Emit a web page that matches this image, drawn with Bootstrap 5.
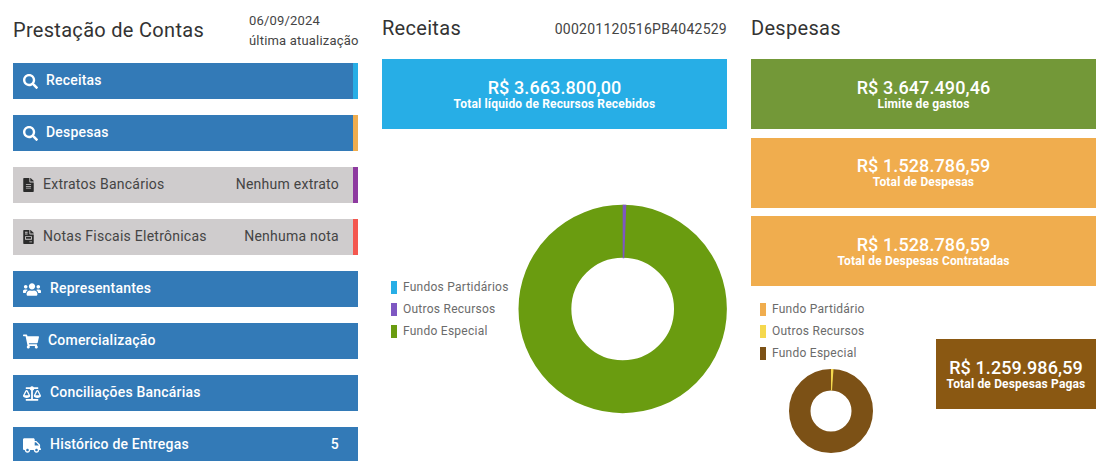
<!DOCTYPE html>
<html lang="pt-BR">
<head>
<meta charset="utf-8">
<title>Prestação de Contas</title>
<link rel="stylesheet" href="https://cdn.jsdelivr.net/npm/bootstrap@5.3.0/dist/css/bootstrap.min.css">
<style>
html, body { height: 461px; overflow: hidden; }
body { font-family: Roboto, "Liberation Sans", sans-serif; color: #333; background: #fff; }
.page-cols { padding: 0 15px 0 13px; gap: 24px; }
.page-col { width: 345px; flex: none; }
.col-head { height: 59px; }
.col-head-first { height: 63px; }
.col-title { font-size: 20px; font-weight: 400; letter-spacing: .3px; line-height: 24px; color: #333; margin: 0; }
.first-title { padding-top: 18px; }
.mid-title { padding-top: 16px; }
.upd { font-size: 13px; letter-spacing: .19px; line-height: 20px; color: #444; padding-top: 11px; width: 109px; white-space: nowrap; }
.proto { font-size: 14px; letter-spacing: .25px; color: #444; padding-top: 19px; line-height: 20px; }
.menu-row { height: 36px; margin-bottom: 16px; padding: 0 14px 2px 10px; font-size: 14px; font-weight: 500; letter-spacing: .2px; color: #fff; background: #337ab7; border-right: 5px solid transparent; position: relative; }
.menu-row.muted-row { background: #cfcccd; color: #444; font-weight: 400; letter-spacing: .25px; }
.menu-row.edge-blue { border-right-color: #27aee6; }
.menu-row.edge-orange { border-right-color: #f0ad4e; }
.menu-row.edge-purple { border-right-color: #8e3aa0; }
.menu-row.edge-red { border-right-color: #f4574f; }
.menu-row.plain { border-right: 0; padding-right: 19px; }
.ico { fill: currentColor; flex: none; display: block; margin-top: 2px; }
.ico-gap { margin-right: 9px; }
.ico-dark { color: #2b2b2b; }
.stat { height: 70px; color: #fff; margin-bottom: 8.5px; }
.stat-val { font-size: 18px; font-weight: 500; line-height: 20px; letter-spacing: .1px; }
.stat-lbl { font-size: 12px; font-weight: 700; line-height: 13px; letter-spacing: .17px; }
.bg-rec { background: #27aee6; }
.bg-lim { background: #739838; }
.bg-des { background: #f0ad4e; }
.bg-pag { background: #8a5812; width: 160px; margin: 0; }
.chart-wrap { padding: 66.5px 0 0 9px; }
.legend-list { font-size: 12px; letter-spacing: .25px; color: #6b6b6b; width: 127px; }
.legend-row { height: 22px; line-height: 22px; }
.swatch { width: 6px; height: 13px; margin-right: 6px; flex: none; }
.sw-blue { background: #27aee6; }
.sw-purple { background: #7e57c2; }
.sw-green { background: #6a9c10; }
.sw-orange { background: #f0ad4e; }
.sw-yellow { background: #f5d84e; }
.sw-brown { background: #7c5116; }
.low-block { padding: 4px 0 0 9px; width: 185px; }
.low-area { margin-top: -.5px; }
.pag-wrap { padding-top: 45px; }
.low-donut { margin: 4px 0 0 28px; display: block; }
.big-donut { display: block; }
</style>
</head>
<body>
<div class="d-flex page-cols">
  <div class="page-col">
    <div class="col-head-first d-flex justify-content-between">
      <h1 class="col-title first-title">Prestação de Contas</h1>
      <div class="upd">06/09/2024<br>última atualização</div>
    </div>
    <div class="menu-row edge-blue d-flex align-items-center">
      <svg class="ico me-2" width="15" height="15" viewBox="0 0 512 512"><path d="M505 442.7L405.3 343c-4.5-4.5-10.6-7-17-7H372c27.6-35.3 44-79.7 44-128C416 93.1 322.9 0 208 0S0 93.1 0 208s93.1 208 208 208c48.3 0 92.7-16.4 128-44v16.3c0 6.4 2.5 12.5 7 17l99.7 99.7c9.4 9.4 24.6 9.4 33.9 0l28.3-28.3c9.4-9.4 9.4-24.6.1-34zM208 336c-70.7 0-128-57.2-128-128 0-70.7 57.2-128 128-128 70.7 0 128 57.2 128 128 0 70.7-57.2 128-128 128z"/></svg>
      <span>Receitas</span>
    </div>
    <div class="menu-row edge-orange d-flex align-items-center">
      <svg class="ico me-2" width="15" height="15" viewBox="0 0 512 512"><path d="M505 442.7L405.3 343c-4.5-4.5-10.6-7-17-7H372c27.6-35.3 44-79.7 44-128C416 93.1 322.9 0 208 0S0 93.1 0 208s93.1 208 208 208c48.3 0 92.7-16.4 128-44v16.3c0 6.4 2.5 12.5 7 17l99.7 99.7c9.4 9.4 24.6 9.4 33.9 0l28.3-28.3c9.4-9.4 9.4-24.6.1-34zM208 336c-70.7 0-128-57.2-128-128 0-70.7 57.2-128 128-128 70.7 0 128 57.2 128 128 0 70.7-57.2 128-128 128z"/></svg>
      <span>Despesas</span>
    </div>
    <div class="menu-row muted-row edge-purple d-flex align-items-center justify-content-between">
      <span class="d-flex align-items-center">
        <svg class="ico ico-dark ico-gap" width="11" height="14" viewBox="0 0 384 512"><path d="M224 136V0H24C10.7 0 0 10.7 0 24v464c0 13.3 10.7 24 24 24h336c13.3 0 24-10.7 24-24V160H248c-13.2 0-24-10.8-24-24zm64 236c0 6.6-5.4 12-12 12H108c-6.6 0-12-5.4-12-12v-8c0-6.6 5.4-12 12-12h168c6.6 0 12 5.4 12 12v8zm0-64c0 6.6-5.4 12-12 12H108c-6.6 0-12-5.4-12-12v-8c0-6.6 5.4-12 12-12h168c6.6 0 12 5.4 12 12v8zm0-72v8c0 6.6-5.4 12-12 12H108c-6.6 0-12-5.4-12-12v-8c0-6.6 5.4-12 12-12h168c6.6 0 12 5.4 12 12zm96-114.1v6.1H256V0h6.1c6.4 0 12.5 2.5 17 7l97.9 98c4.5 4.5 7 10.6 7 16.9z"/></svg>
        Extratos Bancários
      </span>
      <span>Nenhum extrato</span>
    </div>
    <div class="menu-row muted-row edge-red d-flex align-items-center justify-content-between">
      <span class="d-flex align-items-center">
        <svg class="ico ico-dark ico-gap" width="11" height="14" viewBox="0 0 384 512"><path d="M288 256H96v64h192v-64zm89-151L279.1 7c-4.5-4.5-10.6-7-17-7H256v128h128v-6.1c0-6.3-2.5-12.4-7-16.9zm-153 31V0H24C10.7 0 0 10.7 0 24v464c0 13.3 10.7 24 24 24h336c13.3 0 24-10.7 24-24V160H248c-13.2 0-24-10.8-24-24zM64 72c0-4.42 3.58-8 8-8h80c4.42 0 8 3.58 8 8v16c0 4.42-3.58 8-8 8H72c-4.42 0-8-3.58-8-8V72zm0 64c0-4.42 3.58-8 8-8h80c4.42 0 8 3.58 8 8v16c0 4.42-3.58 8-8 8H72c-4.42 0-8-3.58-8-8v-16zm256 304c0 4.42-3.58 8-8 8h-80c-4.42 0-8-3.58-8-8v-16c0-4.42 3.58-8 8-8h80c4.42 0 8 3.58 8 8v16zm0-200v96c0 8.84-7.16 16-16 16H80c-8.84 0-16-7.16-16-16v-96c0-8.84 7.16-16 16-16h224c8.84 0 16 7.16 16 16z"/></svg>
        Notas Fiscais Eletrônicas
      </span>
      <span>Nenhuma nota</span>
    </div>
    <div class="menu-row plain d-flex align-items-center">
      <svg class="ico ico-gap" width="18" height="15" viewBox="0 0 640 512"><path d="M96 224c35.3 0 64-28.7 64-64s-28.7-64-64-64-64 28.7-64 64 28.7 64 64 64zm448 0c35.3 0 64-28.7 64-64s-28.7-64-64-64-64 28.7-64 64 28.7 64 64 64zm32 32h-64c-17.6 0-33.5 7.1-45.1 18.6 40.3 22.1 68.9 62 75.1 109.4h66c17.7 0 32-14.3 32-32v-32c0-35.3-28.7-64-64-64zm-256 0c61.9 0 112-50.1 112-112S381.9 32 320 32 208 82.1 208 144s50.1 112 112 112zm76.8 32h-8.3c-20.8 10-43.9 16-68.5 16s-47.6-6-68.5-16h-8.3C179.6 288 128 339.6 128 403.2V432c0 26.5 21.5 48 48 48h288c26.5 0 48-21.5 48-48v-28.8c0-63.6-51.6-115.2-115.2-115.2zm-223.7-13.4C161.5 263.1 145.6 256 128 256H64c-35.3 0-64 28.7-64 64v32c0 17.7 14.3 32 32 32h65.9c6.3-47.4 34.9-87.3 75.2-109.4z"/></svg>
      <span>Representantes</span>
    </div>
    <div class="menu-row plain d-flex align-items-center">
      <svg class="ico ico-gap" width="16" height="15" viewBox="0 0 576 512"><path d="M528.12 301.319l47.273-208C578.806 78.301 567.391 64 551.99 64H159.208l-9.166-44.81C147.758 8.021 137.93 0 126.529 0H24C10.745 0 0 10.745 0 24v16c0 13.255 10.745 24 24 24h69.883l70.248 343.435C147.325 417.1 136 435.222 136 456c0 30.928 25.072 56 56 56s56-25.072 56-56c0-15.674-6.447-29.835-16.824-40h209.647C430.447 426.165 424 440.326 424 456c0 30.928 25.072 56 56 56s56-25.072 56-56c0-22.172-12.888-41.332-31.579-50.405l5.517-24.276c3.413-15.018-8.002-29.319-23.403-29.319H218.117l-6.545-32h293.145c11.206 0 20.92-7.754 23.403-18.681z"/></svg>
      <span>Comercialização</span>
    </div>
    <div class="menu-row plain d-flex align-items-center">
      <svg class="ico ico-gap" width="18" height="15" viewBox="0 0 640 512"><path d="M256 336h-.02c0-16.18 1.34-8.73-85.05-181.51-17.65-35.29-68.19-35.36-85.87 0C-2.06 328.75.02 320.33.02 336H0c0 44.18 57.31 80 128 80s128-35.82 128-80zM128 176l72 144H56l72-144zm511.98 160c0-16.18 1.34-8.73-85.05-181.51-17.65-35.29-68.19-35.36-85.87 0-87.12 174.26-85.04 165.84-85.04 181.51H384c0 44.18 57.31 80 128 80s128-35.82 128-80h-.02zM440 320l72-144 72 144H440zm88 128H352V153.25c23.51-10.29 41.16-31.48 46.39-57.25H528c8.84 0 16-7.16 16-16V48c0-8.84-7.16-16-16-16H383.64C369.04 12.68 346.09 0 320 0s-49.04 12.68-63.64 32H112c-8.84 0-16 7.16-16 16v32c0 8.84 7.16 16 16 16h129.61c5.23 25.76 22.87 46.96 46.39 57.25V448H112c-8.84 0-16 7.16-16 16v32c0 8.84 7.16 16 16 16h416c8.84 0 16-7.16 16-16v-32c0-8.84-7.16-16-16-16z"/></svg>
      <span>Conciliações Bancárias</span>
    </div>
    <div class="menu-row plain d-flex align-items-center justify-content-between">
      <span class="d-flex align-items-center">
        <svg class="ico ico-gap" width="18" height="15" viewBox="0 0 640 512"><path d="M624 352h-16V243.9c0-12.7-5.1-24.9-14.1-33.9L494 110.1c-9-9-21.2-14.1-33.9-14.1H416V48c0-26.5-21.5-48-48-48H48C21.5 0 0 21.5 0 48v320c0 26.5 21.5 48 48 48h16c0 53 43 96 96 96s96-43 96-96h128c0 53 43 96 96 96s96-43 96-96h48c8.8 0 16-7.2 16-16v-32c0-8.8-7.2-16-16-16zM160 464c-26.5 0-48-21.5-48-48s21.5-48 48-48 48 21.5 48 48-21.5 48-48 48zm320 0c-26.5 0-48-21.5-48-48s21.5-48 48-48 48 21.5 48 48-21.5 48-48 48zm80-208H416V144h44.1l99.9 99.9V256z"/></svg>
        Histórico de Entregas
      </span>
      <span>5</span>
    </div>
  </div>

  <div class="page-col">
    <div class="col-head d-flex justify-content-between">
      <h2 class="col-title mid-title">Receitas</h2>
      <div class="proto">000201120516PB4042529</div>
    </div>
    <div class="stat bg-rec d-flex flex-column justify-content-center text-center">
      <div class="stat-val">R$ 3.663.800,00</div>
      <div class="stat-lbl">Total líquido de Recursos Recebidos</div>
    </div>
    <div class="chart-wrap d-flex align-items-center">
      <div class="legend-list">
        <div class="legend-row d-flex align-items-center"><i class="swatch sw-blue"></i>Fundos Partidários</div>
        <div class="legend-row d-flex align-items-center"><i class="swatch sw-purple"></i>Outros Recursos</div>
        <div class="legend-row d-flex align-items-center"><i class="swatch sw-green"></i>Fundo Especial</div>
      </div>
      <svg class="big-donut" width="210" height="210" viewBox="0 0 210 210">
        <circle cx="105" cy="105" r="78" fill="none" stroke="#6a9c10" stroke-width="53"/>
        <path d="M105 .5 L105 54 L106.6 54 L108.6 .5 Z" fill="#7e57c2"/>
      </svg>
    </div>
  </div>

  <div class="page-col">
    <div class="col-head">
      <h2 class="col-title mid-title">Despesas</h2>
    </div>
    <div class="stat bg-lim d-flex flex-column justify-content-center text-center">
      <div class="stat-val">R$ 3.647.490,46</div>
      <div class="stat-lbl">Limite de gastos</div>
    </div>
    <div class="stat bg-des d-flex flex-column justify-content-center text-center">
      <div class="stat-val">R$ 1.528.786,59</div>
      <div class="stat-lbl">Total de Despesas</div>
    </div>
    <div class="stat bg-des d-flex flex-column justify-content-center text-center">
      <div class="stat-val">R$ 1.528.786,59</div>
      <div class="stat-lbl">Total de Despesas Contratadas</div>
    </div>
    <div class="low-area d-flex justify-content-between">
      <div class="low-block">
        <div class="legend-list">
          <div class="legend-row d-flex align-items-center"><i class="swatch sw-orange"></i>Fundo Partidário</div>
          <div class="legend-row d-flex align-items-center"><i class="swatch sw-yellow"></i>Outros Recursos</div>
          <div class="legend-row d-flex align-items-center"><i class="swatch sw-brown"></i>Fundo Especial</div>
        </div>
        <svg class="low-donut" width="86" height="86" viewBox="0 0 86 86">
          <circle cx="43" cy="43" r="31.25" fill="none" stroke="#7c5116" stroke-width="21.5"/>
          <path d="M43 1 L43 22.5 L44 22.5 L45.5 1 Z" fill="#f5d84e"/>
        </svg>
      </div>
      <div class="pag-wrap">
        <div class="stat bg-pag d-flex flex-column justify-content-center text-center">
          <div class="stat-val">R$ 1.259.986,59</div>
          <div class="stat-lbl">Total de Despesas Pagas</div>
        </div>
      </div>
    </div>
  </div>
</div>
<script src="https://cdn.jsdelivr.net/npm/bootstrap@5.3.0/dist/js/bootstrap.bundle.min.js"></script>
</body>
</html>
